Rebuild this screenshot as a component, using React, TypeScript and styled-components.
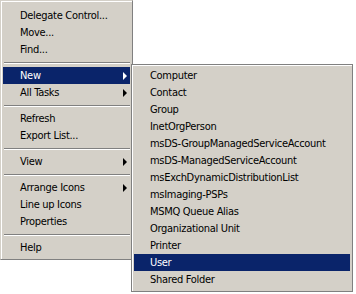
import React from "react";
import styled, { createGlobalStyle } from "styled-components";

const Global = createGlobalStyle`
  html, body { margin: 0; padding: 0; background: #ffffff; }
  body { font-family: "DejaVu Sans Condensed", "DejaVu Sans", sans-serif; font-stretch: condensed; }
`;

const Canvas = styled.div`
  position: relative;
  width: 356px;
  height: 294px;
  background: #ffffff;
  overflow: hidden;
`;

const MenuPanel = styled.div`
  box-sizing: border-box;
  background: #d4d0c8;
  border: 1px solid #808080;
  border-top-color: #d4d0c8;
  border-left-color: #d4d0c8;
  box-shadow: inset 1px 1px 0 #ffffff;
  display: flex;
  flex-direction: column;
`;

const MainMenu = styled(MenuPanel)`
  width: 133px;
  height: 260px;
  padding: 6px 2px 2px 2px;
`;

const SubMenu = styled(MenuPanel)`
  position: absolute;
  left: 131px;
  top: 64px;
  width: 222px;
  height: 228px;
  padding: 2px 2px 3px 2px;
  border-color: #808080;
`;

const Item = styled.div<{ $active?: boolean; $indent: number }>`
  position: relative;
  height: 17px;
  line-height: 17px;
  padding-left: ${(p) => p.$indent}px;
  font-family: "DejaVu Sans Condensed", "DejaVu Sans", sans-serif;
  font-stretch: condensed;
  font-size: 11px;
  letter-spacing: -0.3px;
  color: ${(p) => (p.$active ? "#ffffff" : "#000000")};
  background: ${(p) => (p.$active ? "#0a246a" : "transparent")};
  white-space: nowrap;
`;

const Arrow = styled.span<{ $active?: boolean }>`
  position: absolute;
  right: 3px;
  top: 5px;
  width: 0;
  height: 0;
  border-top: 4px solid transparent;
  border-bottom: 4px solid transparent;
  border-left: 4px solid ${(p) => (p.$active ? "#ffffff" : "#000000")};
`;

const Separator = styled.div`
  height: 9px;
  display: flex;
  flex-direction: column;
  justify-content: center;
  padding: 0 0 0 1px;
  &::before {
    content: "";
    display: block;
    height: 1px;
    background: #808080;
  }
  &::after {
    content: "";
    display: block;
    height: 1px;
    background: #ffffff;
  }
`;

type Entry = { label?: string; sub?: boolean; active?: boolean; sep?: boolean };

const mainItems: Entry[] = [
  { label: "Delegate Control..." },
  { label: "Move..." },
  { label: "Find..." },
  { sep: true },
  { label: "New", sub: true, active: true },
  { label: "All Tasks", sub: true },
  { sep: true },
  { label: "Refresh" },
  { label: "Export List..." },
  { sep: true },
  { label: "View", sub: true },
  { sep: true },
  { label: "Arrange Icons", sub: true },
  { label: "Line up Icons" },
  { label: "Properties" },
  { sep: true },
  { label: "Help" },
];

const subItems: Entry[] = [
  { label: "Computer" },
  { label: "Contact" },
  { label: "Group" },
  { label: "InetOrgPerson" },
  { label: "msDS-GroupManagedServiceAccount" },
  { label: "msDS-ManagedServiceAccount" },
  { label: "msExchDynamicDistributionList" },
  { label: "msImaging-PSPs" },
  { label: "MSMQ Queue Alias" },
  { label: "Organizational Unit" },
  { label: "Printer" },
  { label: "User", active: true },
  { label: "Shared Folder" },
];

function renderEntries(entries: Entry[], indent: number) {
  return entries.map((e, i) =>
    e.sep ? (
      <Separator key={i} />
    ) : (
      <Item key={i} $active={e.active} $indent={indent}>
        {e.label}
        {e.sub && <Arrow $active={e.active} />}
      </Item>
    )
  );
}

export default function App() {
  return (
    <>
      <Global />
      <Canvas>
        <MainMenu>{renderEntries(mainItems, 17)}</MainMenu>
        <SubMenu>{renderEntries(subItems, 16)}</SubMenu>
      </Canvas>
    </>
  );
}
